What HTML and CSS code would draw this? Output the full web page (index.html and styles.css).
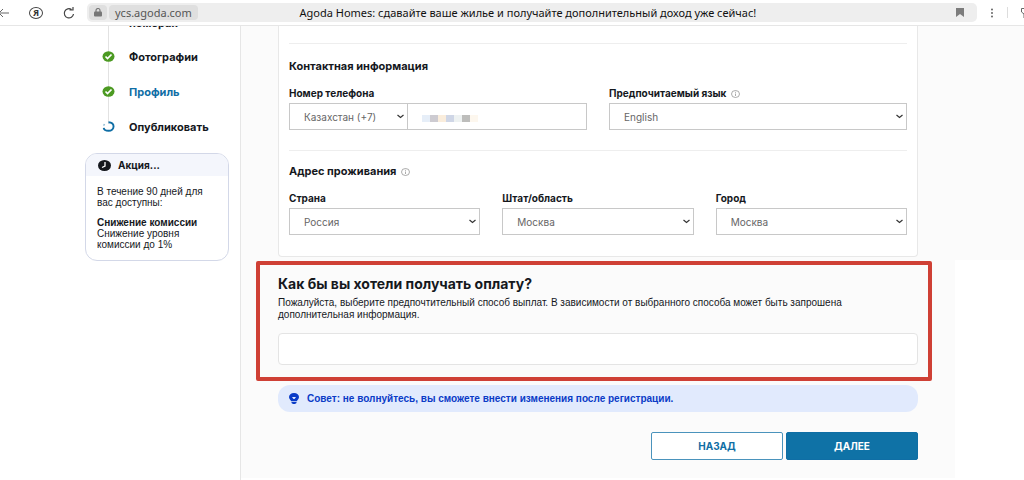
FILE: index.html
```
<!DOCTYPE html>
<html lang="ru">
<head>
  <meta charset="utf-8">
  <title>Agoda Homes</title>
  <link rel="stylesheet" href="styles.css">
</head>
<body>
  <header class="toolbar">
    <button class="tool" aria-label="Back">
      <svg width="12" height="12" viewBox="0 0 12 12"><path d="M12 6H2M6 2L2 6l4 4" fill="none" stroke="#666"/></svg>
    </button>
    <button class="tool yandex" aria-label="Yandex">Я</button>
    <button class="tool" aria-label="Reload">
      <svg width="12" height="12" viewBox="0 0 12 12"><path d="M10.500 7A4.600 4.600 0 1 1 8.500 2.500M6.500 3h3.500V0" fill="none" stroke="#444" stroke-width="1.200"/></svg>
    </button>
    <div class="address">
      <span class="lock">
        <svg width="8" height="9" viewBox="0 0 8 9"><path d="M2 4V2.500a2 2 0 0 1 4 0V4" fill="none" stroke="#777" stroke-width="1.200"/><rect y="3.500" width="8" height="5" rx="1" fill="#777"/></svg>
      </span>
      <span class="host">ycs.agoda.com</span>
      <span class="page-title">Agoda Homes: сдавайте ваше жилье и получайте дополнительный доход уже сейчас!</span>
      <svg class="bookmark" width="8" height="9" viewBox="0 0 8 9"><path d="M0 0h8v9L4 6 0 9z" fill="#7c7c7c"/></svg>
    </div>
    <button class="tool menu" aria-label="Menu">
      <svg width="4" height="10" viewBox="0 0 4 10" fill="#555"><circle cx="2" cy="1.500" r=".9"/><circle cx="2" cy="5" r=".9"/><circle cx="2" cy="8.500" r=".9"/></svg>
    </button>
    <span class="divider"></span>
    <svg class="extension" width="3" height="10" viewBox="0 0 3 10"><path d="M3 .5H.5V4L3 6v4" fill="none" stroke="#666"/></svg>
  </header>

  <div class="page">
    <aside class="sidebar">
      <ul class="steps">
        <li><svg width="13" height="11"></svg><a href="#">номерах</a></li>
        <li>
          <svg width="13" height="11" viewBox="0 0 13 11"><ellipse cx="6.500" cy="5.500" rx="6" ry="5.200" fill="#4c9a22"/><path d="M3.500 5.500l2 2 4-4" fill="none" stroke="#fff" stroke-width="1.700"/></svg>
          <a href="#">Фотографии</a>
        </li>
        <li>
          <svg width="13" height="11" viewBox="0 0 13 11"><ellipse cx="6.500" cy="5.500" rx="6" ry="5.200" fill="#4c9a22"/><path d="M3.500 5.500l2 2 4-4" fill="none" stroke="#fff" stroke-width="1.700"/></svg>
          <a href="#" class="current">Профиль</a>
        </li>
        <li>
          <svg width="13" height="11" viewBox="0 0 13 11"><path d="M6.500 1.200c7 0 6.500 8.600 0 8.600-2.500 0-4.500-1.300-4.800-3" fill="none" stroke="#0f6ea5" stroke-width="1.900"/><path d="M1.600 4.700l.9-1.700" stroke="#8fbbd3" stroke-width="1.500"/></svg>
          <a href="#">Опубликовать</a>
        </li>
      </ul>
      <section class="promo">
        <h3>
          <svg width="13" height="11" viewBox="0 0 13 11"><ellipse cx="6.500" cy="5.500" rx="6.500" ry="5.500" fill="#15181d"/><path d="M7 2v4L4 7.500" fill="none" stroke="#fff" stroke-width="1.300"/></svg>
          Акция...
        </h3>
        <div class="promo-body">
          <p>В течение 90 дней для вас доступны:</p>
          <p><strong>Снижение комиссии</strong><br>Снижение уровня комиссии до 1%</p>
        </div>
      </section>
    </aside>

    <main class="content">
      <form>
        <div class="card">
          <section class="group">
            <h3>Контактная информация</h3>
            <div class="row two">
              <div class="field">
                <label for="phone">Номер телефона</label>
                <div class="phone">
                  <select id="code" aria-label="Код страны"><option>Казахстан (+7)</option></select>
                  <div class="number">
                    <input type="tel" id="phone">
                    <span class="mosaic"><i></i><i></i><i></i><i></i><i></i><i></i><i></i></span>
                  </div>
                </div>
              </div>
              <div class="field">
                <label for="lang">Предпочитаемый язык
                  <svg class="info" width="9" height="8" viewBox="0 0 9 8"><ellipse cx="4.500" cy="4" rx="4" ry="3.500"/><path d="M4.500 3.500V6M4.500 1.800v1"/></svg>
                </label>
                <select id="lang"><option>English</option></select>
              </div>
            </div>
          </section>
          <section class="group">
            <h3>Адрес проживания
              <svg class="info" width="9" height="8" viewBox="0 0 9 8"><ellipse cx="4.500" cy="4" rx="4" ry="3.500"/><path d="M4.500 3.500V6M4.500 1.800v1"/></svg>
            </h3>
            <div class="row three">
              <div class="field">
                <label for="country">Страна</label>
                <select id="country"><option>Россия</option></select>
              </div>
              <div class="field">
                <label for="region">Штат/область</label>
                <select id="region"><option>Москва</option></select>
              </div>
              <div class="field">
                <label for="city">Город</label>
                <select id="city"><option>Москва</option></select>
              </div>
            </div>
          </section>
        </div>

        <section class="payout">
          <h2>Как бы вы хотели получать оплату?</h2>
          <p>Пожалуйста, выберите предпочтительный способ выплат. В зависимости от выбранного способа может быть запрошена дополнительная информация.</p>
          <div class="payout-box"></div>
        </section>

        <div class="tip">
          <svg width="10" height="11" viewBox="0 0 10 11"><path d="M5 0c3 0 5 1.800 5 4 0 2-1.500 2.800-2.200 4.200H2.200C1.500 6.800 0 6 0 4c0-2.200 2-4 5-4zM2.500 9h5v1L6 11H4L2.500 10z" fill="#0a3bc7"/><path d="M3 4h4L5.500 6h-1z" fill="#e1eafd"/></svg>
          Совет: не волнуйтесь, вы сможете внести изменения после регистрации.
        </div>

        <div class="actions">
          <button type="button" class="btn">НАЗАД</button>
          <button type="submit" class="btn primary">ДАЛЕЕ</button>
        </div>
      </form>
    </main>
    <div class="rail"></div>
  </div>
</body>
</html>
```
FILE: styles.css
```
* {
  box-sizing: border-box;
}
body {
  margin: 0;
  height: 100vh;
  display: flex;
  flex-direction: column;
  overflow: hidden;
  background: #fff;
  color: #15181d;
  font-family: Inter, "Liberation Sans", sans-serif;
  font-size: 10px;
}
h2, h3, p, ul {
  margin: 0;
  padding: 0;
}
button, select, input {
  font-family: inherit;
}

/* browser toolbar */
.toolbar {
  flex: none;
  display: flex;
  align-items: center;
  height: 26px;
  border-bottom: 1px solid #e6e6e6;
  font-family: "Noto Sans", sans-serif;
  overflow: hidden;
}
.tool {
  display: flex;
  flex: none;
  align-items: center;
  justify-content: center;
  width: 12px;
  padding: 0;
  border: 0;
  background: none;
  margin-right: 20px;
}
.tool:first-child {
  margin-left: -3px;
}
.yandex {
  width: 14px;
  height: 12px;
  border: 1px solid #444;
  border-radius: 50%;
  font-size: 9px;
  font-weight: 700;
  line-height: 10px;
  color: #333;
}
.address {
  flex: 1;
  display: flex;
  align-items: center;
  height: 19px;
  margin-left: -8px;
  padding: 0 13px 0 2px;
  border-radius: 5px;
  background: #eee;
}
.lock, .host {
  display: flex;
  align-items: center;
  height: 15px;
  border-radius: 4px;
  background: #dfdfdf;
}
.lock {
  padding: 0 5px;
  margin-right: 2px;
}
.host {
  padding: 0 6px;
  font-size: 11px;
  color: #555;
}
.page-title {
  flex: 1;
  text-align: center;
  padding-right: 98px;
  font-size: 11px;
  color: #111;
  white-space: nowrap;
}
.menu {
  margin: 0 9px;
}
.divider {
  width: 1px;
  height: 11px;
  background: #ddd;
}
.extension {
  flex: none;
  margin-left: 13px;
}

/* page */
.page {
  flex: 1;
  min-height: 0;
  display: flex;
  overflow: hidden;
}
.sidebar {
  flex: none;
  width: 241px;
  padding: 0 11px 0 85px;
  border-right: 1px solid #e6e6e6;
}
.steps {
  list-style: none;
  margin-top: -22px;
  padding-left: 17px;
  background: linear-gradient(#e2e2e2, #e2e2e2) 23px 0 / 1px 120px no-repeat;
}
.steps li {
  display: flex;
  align-items: center;
  gap: 14px;
  height: 35px;
}
.steps li:first-child {
  padding-top: 2px;
}
.steps a {
  color: #15181d;
  font-size: 11px;
  font-weight: 700;
  text-decoration: none;
}
.steps .current {
  color: #0f6ea5;
}
.promo {
  margin-top: 9px;
  border: 1px solid #d3d8e8;
  border-radius: 12px;
  overflow: hidden;
}
.promo h3 {
  display: flex;
  align-items: center;
  gap: 7px;
  height: 22px;
  padding-left: 12px;
  background: #f4f6fc;
  font-size: 10px;
}
.promo-body {
  padding: 10px 11px;
  line-height: 11px;
  font-family: "Liberation Sans", sans-serif;
}
.promo p + p {
  margin-top: 9px;
}

.content {
  flex: 1;
  padding: 0 37px;
  margin-bottom: 2px;
  background: #fbfbfb;
}
.rail {
  flex: none;
  width: 69px;
  height: 234px;
  background: #fbfbfb;
}
.card {
  padding: 17px 10px 21px;
  border: 1px solid #e8e8e8;
  border-top: 0;
  border-radius: 0 0 4px 4px;
  background: #fff;
}
.group {
  border-top: 1px solid #eee;
}
.group + .group {
  margin-top: 20px;
}
.group h3 {
  padding: 15px 0 13px;
  font-size: 11px;
  line-height: 15px;
}
.group + .group h3 {
  padding-top: 13px;
}
.row {
  display: grid;
  gap: 22px;
}
.two {
  grid-template-columns: repeat(2, 1fr);
}
.three {
  grid-template-columns: repeat(3, 1fr);
}
label {
  display: block;
  font-weight: 700;
  line-height: 12px;
  margin-bottom: 4px;
}
.info {
  margin-left: 2px;
  vertical-align: -1px;
  fill: none;
  stroke: #888;
  stroke-width: .7;
}
select, input {
  display: block;
  width: 100%;
  height: 27px;
  margin: 0;
  padding: 0 14px;
  border: 1px solid #c8c8c8;
  border-radius: 0;
  background: #fff;
  color: #666;
  font-size: 10px;
}
select {
  appearance: none;
  background: #fff url("data:image/svg+xml,%3Csvg xmlns='http://www.w3.org/2000/svg' width='7' height='5'%3E%3Cpath d='M.5 1l3 2.500 3-2.500' fill='none' stroke='%23333' stroke-width='1.200'/%3E%3C/svg%3E") no-repeat right 3px center;
}
.phone {
  display: flex;
}
.phone select {
  width: 40%;
  padding-right: 10px;
}
.number {
  flex: 1;
  margin-left: -1px;
  position: relative;
}
.mosaic {
  position: absolute;
  left: 15px;
  top: 12px;
  display: flex;
}
.mosaic i {
  width: 8px;
  height: 7px;
  background: #e6eef8;
}
.mosaic i:nth-child(2) { background: #cdcbd1; }
.mosaic i:nth-child(3) { background: #faeddc; }
.mosaic i:nth-child(4) { background: #cfd6e6; }
.mosaic i:nth-child(5) { background: #eef2f2; }
.mosaic i:nth-child(6) { background: #bdbdbb; }
.mosaic i:nth-child(7) { background: #fdf7ee; }

.payout {
  margin: 4px -14px 4px -22px;
  padding: 10px 10px 12px 18px;
  border: 4px solid #cf4035;
  border-radius: 2px;
}
.payout h2 {
  font-size: 14px;
  line-height: 18px;
  margin-bottom: 4px;
}
.payout p {
  font-family: "Liberation Sans", sans-serif;
  line-height: 12px;
}
.payout-box {
  height: 32px;
  margin-top: 12px;
  border: 1px solid #e4e4e4;
  border-radius: 4px;
  background: #fff;
}
.tip {
  display: flex;
  align-items: center;
  gap: 8px;
  height: 27px;
  padding-left: 11px;
  border-radius: 12px;
  background: #e1eafd;
  color: #0a3bc7;
  font-family: "Liberation Sans", sans-serif;
  font-weight: 700;
}
.actions {
  display: flex;
  justify-content: flex-end;
  gap: 3px;
  margin-top: 20px;
}
.btn {
  width: 132px;
  height: 28px;
  border: 1px solid #4a93bc;
  border-radius: 2px;
  background: #fff;
  color: #0f6ea5;
  font-size: 10px;
  font-weight: 700;
}
.primary {
  border-color: #0f6ea5;
  background: #0f72a6;
  color: #fff;
}
```
